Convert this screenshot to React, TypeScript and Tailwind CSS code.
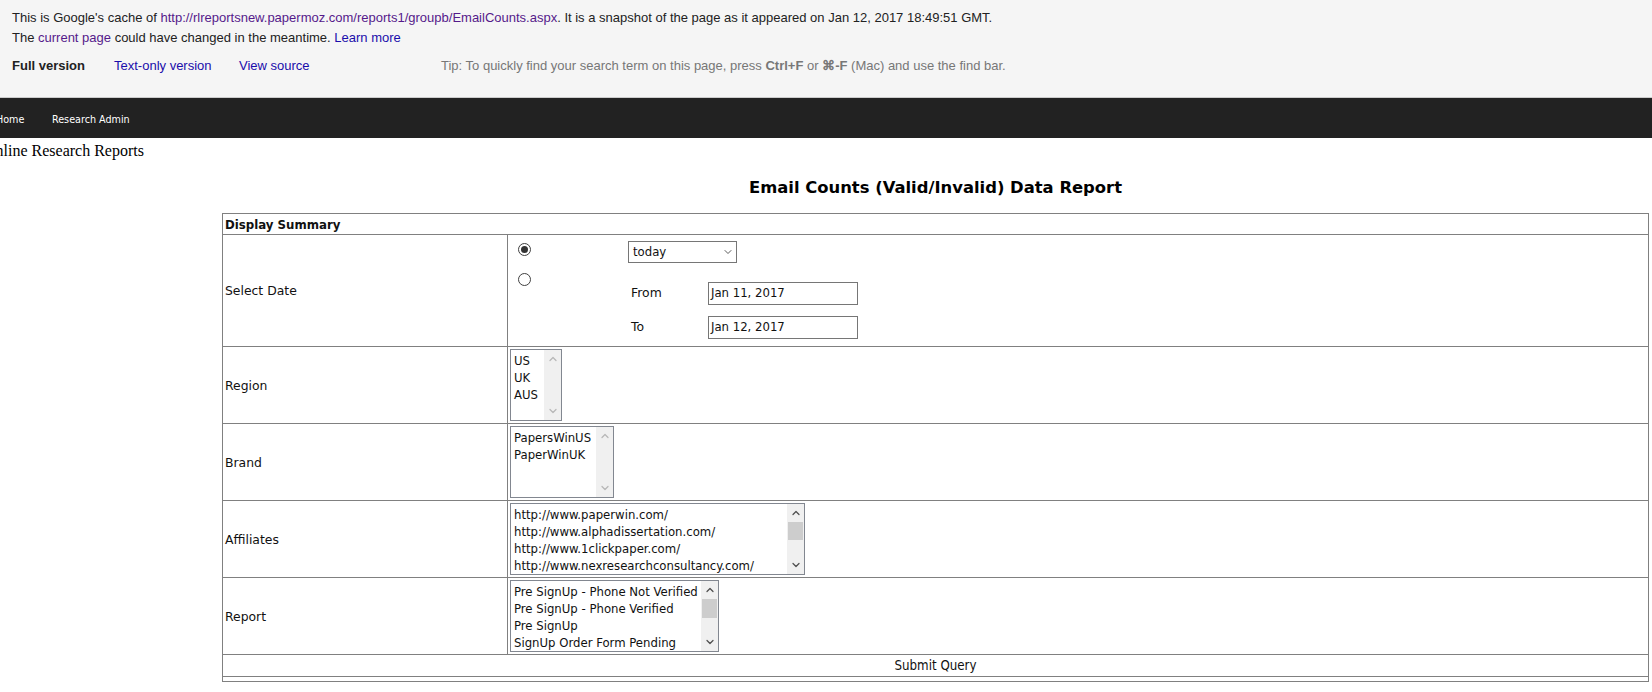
import { ChevronDown, ChevronUp } from 'lucide-react';

const condensed = "[font-family:'DejaVu_Sans_Condensed','DejaVu_Sans',sans-serif] [font-stretch:condensed]";
const labelFont = "[font-family:'DejaVu_Sans',Verdana,sans-serif] text-[12.4px]";

function ListBox({ items, width, enabled, thumbHeight }: {
  items: string[];
  width: string;
  enabled?: boolean;
  thumbHeight?: string;
}) {
  const arrow = enabled ? 'text-[#505050]' : 'text-[#b8b8b8]';
  return (
    <div className={`${width} flex h-[72px] border border-[#828790] bg-white ${condensed}`}>
      <div className="min-w-0 flex-1 overflow-hidden pl-[3px] pt-[2px]">
        {items.map(item => (
          <div key={item} className="h-[17px] whitespace-nowrap text-[13px] leading-[17px] text-[#111]">{item}</div>
        ))}
      </div>
      <div className="flex w-[17px] shrink-0 flex-col bg-[#f0f0f0]">
        <div className="flex h-[18px] flex-none items-center justify-center">
          <ChevronUp size={12} strokeWidth={2.5} className={arrow} />
        </div>
        {enabled && <div className={`${thumbHeight} mx-[1px] flex-none bg-[#cdcdcd]`} />}
        <div className="flex-1" />
        <div className="flex h-[18px] flex-none items-center justify-center">
          <ChevronDown size={12} strokeWidth={2.5} className={arrow} />
        </div>
      </div>
    </div>
  );
}

function Row({ label, children, height }: { label: string; children: React.ReactNode; height: string }) {
  return (
    <tr className={height}>
      <td className={`w-[285px] border border-[#808080] pl-[2px] pt-[2px] align-middle ${labelFont}`}>{label}</td>
      <td className="border border-[#808080] pl-[2px] align-middle">{children}</td>
    </tr>
  );
}

function Radio({ checked }: { checked?: boolean }) {
  return (
    <div className="flex h-[13px] w-[13px] items-center justify-center rounded-full border border-[#404040] bg-white">
      {checked && <div className="h-[7px] w-[7px] rounded-full bg-[#333]" />}
    </div>
  );
}

function DateField({ label, value }: { label: string; value: string }) {
  return (
    <div className="flex items-center">
      <span className={`w-[80px] pl-[3px] ${labelFont}`}>{label}</span>
      <div className={`flex h-[23px] w-[150px] items-center border border-[#767676] pl-[2px] text-[13px] ${condensed}`}>{value}</div>
    </div>
  );
}

export default function App() {
  return (
    <div className="h-[692px] w-[1652px] overflow-hidden bg-white">
      {/* Cache banner */}
      <div className="h-[98px] border-b border-[#cccccc] bg-[#f5f5f5] pl-[12px] pt-[8px] font-['Liberation_Sans',Arial,sans-serif] text-[13px] leading-[20px] text-[#222]">
        <div>
          This is Google's cache of <a className="text-[#551a8b]">http://rlreportsnew.papermoz.com/reports1/groupb/EmailCounts.aspx</a>. It is a snapshot of the page as it appeared on Jan 12, 2017 18:49:51 GMT.
        </div>
        <div>
          The <a className="text-[#551a8b]">current page</a> could have changed in the meantime. <a className="text-[#1a0dab]">Learn more</a>
        </div>
        <div className="mt-[8px] flex">
          <span className="w-[102px] font-bold">Full version</span>
          <a className="w-[125px] text-[#1a0dab]">Text-only version</a>
          <a className="w-[202px] text-[#1a0dab]">View source</a>
          <span className="text-[#777]">
            Tip: To quickly find your search term on this page, press <b>Ctrl+F</b> or <b>⌘-F</b> (Mac) and use the find bar.
          </span>
        </div>
      </div>

      {/* Nav */}
      <div className={`flex h-[40px] items-center bg-[#222222] pt-[5px] text-[10.7px] text-white ${condensed}`}>
        <span className="-ml-[4px] w-[56px]">Home</span>
        <span>Research Admin</span>
      </div>

      <div className="-ml-[16px] mt-[3px] h-[20px] font-['Liberation_Serif','Times_New_Roman',serif] text-[16px] leading-[20px] text-black">
        Online Research Reports
      </div>

      <div className="ml-[222px] w-[1427px]">
        <h1 className="mt-[15px] mb-[13px] text-center font-['DejaVu_Sans',Verdana,sans-serif] text-[16.4px] font-bold leading-[24px] text-black">
          Email Counts (Valid/Invalid) Data Report
        </h1>

        <table className="w-full border-collapse text-[#111]">
          <tbody>
            <tr className="h-[21px]">
              <td colSpan={2} className={`border border-[#808080] pl-[2px] pt-[1px] text-[13.1px] font-bold leading-[18px] ${condensed}`}>Display Summary</td>
            </tr>
            <Row label="Select Date" height="h-[112px]">
              <div className="flex pb-[2px]">
                <div className="ml-[8px] flex w-[110px] flex-col gap-[17px] pt-[2px]">
                  <Radio checked />
                  <Radio />
                </div>
                <div>
                  <div className={`flex h-[22px] w-[109px] items-center justify-between border border-[#767676] pl-[4px] pr-[2px] text-[13px] ${condensed}`}>
                    today
                    <ChevronDown size={12} strokeWidth={1.75} className="text-[#444]" />
                  </div>
                  <div className="mt-[19px] flex flex-col gap-[11px]">
                    <DateField label="From" value="Jan 11, 2017" />
                    <DateField label="To" value="Jan 12, 2017" />
                  </div>
                </div>
              </div>
            </Row>
            <Row label="Region" height="h-[77px]">
              <ListBox items={['US', 'UK', 'AUS']} width="w-[52px]" />
            </Row>
            <Row label="Brand" height="h-[77px]">
              <ListBox items={['PapersWinUS', 'PaperWinUK']} width="w-[104px]" />
            </Row>
            <Row label="Affiliates" height="h-[77px]">
              <ListBox
                items={['http://www.paperwin.com/', 'http://www.alphadissertation.com/', 'http://www.1clickpaper.com/', 'http://www.nexresearchconsultancy.com/']}
                width="w-[295px]"
                enabled
                thumbHeight="h-[18px]"
              />
            </Row>
            <Row label="Report" height="h-[77px]">
              <ListBox
                items={['Pre SignUp - Phone Not Verified', 'Pre SignUp - Phone Verified', 'Pre SignUp', 'SignUp Order Form Pending']}
                width="w-[209px]"
                enabled
                thumbHeight="h-[19px]"
              />
            </Row>
            <tr className="h-[22px]">
              <td colSpan={2} className={`border border-[#808080] text-center text-[13.2px] ${condensed}`}>Submit Query</td>
            </tr>
            <tr className="h-[5px]">
              <td colSpan={2} className="border border-[#808080]" />
            </tr>
          </tbody>
        </table>
      </div>
    </div>
  );
}
